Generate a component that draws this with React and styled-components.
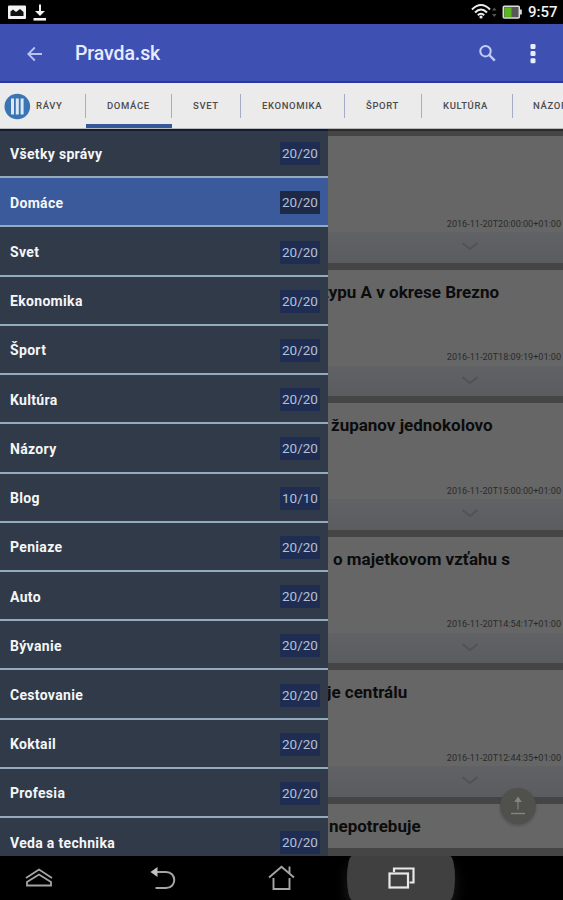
import styled, { createGlobalStyle, css } from 'styled-components';

const GlobalStyle = createGlobalStyle`
* {
  box-sizing: border-box;
}
body {
  margin: 0;
  background: #000;
  font-family: Roboto, "Liberation Sans", sans-serif;
}
`;

const Screen = styled.div`
display: flex;
flex-direction: column;
width: 563px;
height: 900px;
overflow: hidden;
background: #000;
`;

const StatusBar = styled.div`
display: flex;
align-items: center;
flex: none;
height: 24px;
padding: 0 5px 0 8px;
color: #f2f2f2;
svg {
  display: block;
  flex: none;
}
`;

const StatusSpace = styled.div`
flex: 1;
`;

const Clock = styled.span`
flex: none;
width: 30px;
font-size: 15px;
font-weight: 500;
line-height: 24px;
white-space: nowrap;
`;

const Toolbar = styled.header`
display: flex;
align-items: center;
flex: none;
height: 59px;
padding: 2px 25px 0 26px;
background: #3e50b2;
border-bottom: 2px solid #2a37a0;
svg {
  display: block;
  flex: none;
}
`;

const Title = styled.h1`
flex: 1;
margin: 0 0 0 31px;
color: #e6ebff;
font-size: 19.5px;
font-weight: 500;
letter-spacing: -0.1px;
`;

const Tabs = styled.nav`
position: relative;
display: flex;
flex: none;
height: 46px;
background: #ebebeb;
border-bottom: 1px solid #b9b9b9;
overflow: hidden;
`;

const Tab = styled.div`
position: relative;
flex: none;
width: ${(props) => props.$width}px;
padding-left: ${(props) => props.$indent || 21}px;
color: #4c4c4c;
font-size: 9.5px;
font-weight: 500;
letter-spacing: 0.65px;
line-height: 46px;
white-space: nowrap;
&::after {
  content: "";
  position: absolute;
  top: 11px;
  right: 0;
  width: 1px;
  height: 24px;
  background: #a3adc6;
}
${(props) => props.$active && css`
  box-shadow: inset 0 -4px 0 #35589a;
`}
`;

const Badge = styled.div`
position: absolute;
z-index: 1;
top: 0;
left: 0;
width: 36px;
height: 45px;
padding: 10px 0 0 4px;
background: #ebebeb;
`;

const Content = styled.main`
position: relative;
flex: none;
height: 727px;
overflow: hidden;
background: #454545;
box-shadow: inset 0 2px 0 #2b2b2b;
`;

const Feed = styled.div`
display: flex;
flex-direction: column;
gap: 7px;
height: 719px;
padding-top: 7px;
overflow: hidden;
`;

const Card = styled.article`
display: flex;
flex-direction: column;
flex: none;
height: 126.5px;
background: #666;
`;

const CardTitle = styled.h2`
flex: 1;
margin: 0;
padding: 12px 0 0 ${(props) => props.$left}px;
color: #0c0c0c;
font-size: 17px;
font-weight: 700;
line-height: 20px;
white-space: nowrap;
`;

const CardDate = styled.time`
padding: 0 2px 1.5px 0;
color: #2a2a2a;
font-size: 9.1px;
line-height: 14px;
text-align: right;
`;

const CardFooter = styled.div`
display: flex;
flex: none;
height: 30.5px;
padding: 9px 0 0 461px;
background: linear-gradient(#606265, #5a5c5f);
`;

const Drawer = styled.aside`
position: absolute;
top: 0;
left: 0;
width: 328px;
height: 727px;
overflow: hidden;
background: #303a49;
box-shadow: inset 0 2px 0 #111a36;
`;

const DrawerRow = styled.div`
display: flex;
align-items: center;
justify-content: space-between;
height: 49.22px;
padding: 2px 8px 0 10px;
border-bottom: 2px solid #93abbc;
background: ${(props) => (props.$active ? '#3a5a9b' : 'transparent')};
`;

const RowLabel = styled.span`
color: #f4f6f8;
font-size: 14px;
font-weight: 700;
letter-spacing: 0.32px;
`;

const Count = styled.span`
width: 40px;
height: 23px;
border-radius: 1px;
background: ${(props) => (props.$active ? '#1d2947' : '#1f2d52')};
color: #b4c0d6;
font-size: 13.5px;
line-height: 23px;
text-align: center;
`;

const ScrollTop = styled.div`
position: absolute;
top: 659px;
left: 500px;
display: flex;
align-items: center;
justify-content: center;
width: 36px;
height: 36px;
border-radius: 50%;
background: #50504d;
box-shadow: 0 2px 3px rgba(0, 0, 0, 0.18);
`;

const NavBar = styled.footer`
display: flex;
flex: none;
height: 44px;
background: #000;
`;

const NavButton = styled.div`
flex: none;
width: ${(props) => props.$width}px;
padding: 9px 0 0 ${(props) => props.$indent}px;
${(props) => props.$pressed && css`
  border-radius: 5px / 22px;
  background: #404040;
  box-shadow: 0 8px 14px #1c1c1c;
`}
svg {
  display: block;
}
`;

const tabs = [
  { label: 'RÁVY', width: 86, indent: 36 },
  { label: 'DOMÁCE', width: 86, active: true },
  { label: 'SVET', width: 69 },
  { label: 'EKONOMIKA', width: 104 },
  { label: 'ŠPORT', width: 77 },
  { label: 'KULTÚRA', width: 91 },
  { label: 'NÁZORY', width: 86, indent: 20 },
];

const sections = [
  ['Všetky správy', '20/20'],
  ['Domáce', '20/20'],
  ['Svet', '20/20'],
  ['Ekonomika', '20/20'],
  ['Šport', '20/20'],
  ['Kultúra', '20/20'],
  ['Názory', '20/20'],
  ['Blog', '10/10'],
  ['Peniaze', '20/20'],
  ['Auto', '20/20'],
  ['Bývanie', '20/20'],
  ['Cestovanie', '20/20'],
  ['Koktail', '20/20'],
  ['Profesia', '20/20'],
  ['Veda a technika', '20/20'],
];

const articles = [
  { title: '', left: 328, date: '2016-11-20T20:00:00+01:00' },
  { title: 'typu A v okrese Brezno', left: 323, date: '2016-11-20T18:09:19+01:00' },
  { title: 'županov jednokolovo', left: 331, date: '2016-11-20T15:00:00+01:00' },
  { title: 'o majetkovom vzťahu s', left: 333, date: '2016-11-20T14:54:17+01:00' },
  { title: 'je centrálu', left: 327, date: '2016-11-20T12:44:35+01:00' },
  { title: 'nepotrebuje', left: 329, date: '' },
];

function NotificationIcons() {
  return (
    <svg width="40" height="24" viewBox="0 0 40 24">
      <rect x="0" y="5.5" width="18" height="13.5" rx="1" fill="#f2f2f2" />
      <path d="M2.5 16V11.5L5 9.5L8 12L12 9L15.5 12V16Z" fill="#111" />
      <path d="M32 4.5V13M29.5 12L32 14.5L34.5 12Z" fill="#f2f2f2" stroke="#f2f2f2" strokeWidth="2" />
      <path d="M25.5 19.3H38" stroke="#f2f2f2" strokeWidth="2.6" />
    </svg>
  );
}

function SystemIcons() {
  return (
    <svg width="57" height="24" viewBox="0 0 57 24">
      <g fill="none" stroke="#ededed" strokeWidth="2">
        <path d="M1 9.5Q10 0.5 19 9.5" />
        <path d="M4 12.5Q10 6.5 16 12.5" />
        <path d="M6.8 15.3Q10 12 13.2 15.3" />
      </g>
      <circle cx="10" cy="17" r="1.6" fill="#ededed" />
      <path d="M21 10.5L23.3 7.5L25.6 10.5ZM21 14L23.3 17L25.6 14Z" fill="#555" />
      <rect x="32.3" y="6.3" width="16" height="11.6" rx="1" fill="#575757" stroke="#ddd" strokeWidth="1.5" />
      <rect x="33.5" y="7.5" width="7" height="9.4" fill="#58b81c" />
      <rect x="49" y="9.5" width="1.8" height="5" fill="#ddd" />
    </svg>
  );
}

function App() {
  return (
    <>
      <GlobalStyle />
      <Screen>
        <StatusBar>
          <NotificationIcons />
          <StatusSpace />
          <SystemIcons />
          <Clock>9:57</Clock>
        </StatusBar>

        <Toolbar>
          <svg width="18" height="18" viewBox="0 0 18 18" fill="none" stroke="#b9c3f2" strokeWidth="1.8">
            <path d="M16 9H2.8M8.8 2.5L2.3 9L8.8 15.5" />
          </svg>
          <Title>Pravda.sk</Title>
          <svg width="61" height="24" viewBox="0 0 61 24" fill="none">
            <circle cx="8.5" cy="9.2" r="5.2" stroke="#c3cdf8" strokeWidth="2" />
            <path d="M12.3 13L17.8 18.6" stroke="#c3cdf8" strokeWidth="2.4" />
            <g fill="#e9eeff">
              <rect x="53.5" y="2" width="5" height="5" rx="1.3" />
              <rect x="53.5" y="9.1" width="5" height="5" rx="1.3" />
              <rect x="53.5" y="16.2" width="5" height="5" rx="1.3" />
            </g>
          </svg>
        </Toolbar>

        <Tabs>
          {tabs.map((tab) => (
            <Tab key={tab.label} $width={tab.width} $indent={tab.indent} $active={tab.active}>
              {tab.label}
            </Tab>
          ))}
          <Badge>
            <svg width="27" height="27" viewBox="0 0 27 27">
              <circle cx="13.3" cy="13.5" r="12.8" fill="#3b74b3" />
              <path d="M8.5 5.5V21.5M13.3 5.5V21.5M18.1 5.5V21.5" stroke="#dbe8f6" strokeWidth="3" />
            </svg>
          </Badge>
        </Tabs>

        <Content>
          <Feed>
            {articles.map((article) => (
              <Card key={article.left + article.title}>
                <CardTitle $left={article.left}>{article.title}</CardTitle>
                <CardDate>{article.date}</CardDate>
                <CardFooter>
                  <svg width="18" height="11" viewBox="0 0 18 11" fill="none" stroke="#505356" strokeWidth="1.8">
                    <path d="M1.5 2L9 8L16.5 2" />
                  </svg>
                </CardFooter>
              </Card>
            ))}
          </Feed>

          <ScrollTop>
            <svg width="16" height="22" viewBox="0 0 16 22" fill="#85857f" stroke="#85857f">
              <path d="M8 14.5V4M5.3 6.5L8 2.5L10.7 6.5Z" strokeWidth="1.2" />
              <path d="M1 18.5H15" strokeWidth="1.4" />
            </svg>
          </ScrollTop>

          <Drawer>
            {sections.map(([label, count]) => (
              <DrawerRow key={label} $active={label === 'Domáce'}>
                <RowLabel>{label}</RowLabel>
                <Count $active={label === 'Domáce'}>{count}</Count>
              </DrawerRow>
            ))}
          </Drawer>
        </Content>

        <NavBar>
          <NavButton $width={125} $indent={25}>
            <svg width="29" height="26" viewBox="0 0 29 26" fill="none" stroke="#a5a5a5" strokeWidth="1.8">
              <path d="M1 13L14 4.5L27 13" />
              <path d="M2 19.5V17L14 9.5L26 17V20.5H2Z" />
            </svg>
          </NavButton>
          <NavButton $width={125} $indent={25}>
            <svg width="26" height="26" viewBox="0 0 26 26" fill="none" stroke="#a5a5a5" strokeWidth="2">
              <path d="M5 7H16C27 7 27 23 16 23H5.5" />
              <path d="M7.5 2V12L0.5 7Z" fill="#c2c2c2" stroke="none" />
            </svg>
          </NavButton>
          <NavButton $width={97} $indent={18}>
            <svg width="27" height="26" viewBox="0 0 27 26" fill="none" stroke="#a5a5a5" strokeWidth="1.9">
              <path d="M1 12.5L13.5 1.8L26 12.5M21.5 8V1.5" />
              <path d="M5.5 13V24H21.5V13" />
            </svg>
          </NavButton>
          <NavButton $width={108} $indent={40} $pressed>
            <svg width="29" height="26" viewBox="0 0 29 26" fill="none" stroke="#e8e8e8" strokeWidth="2.2">
              <rect x="2.5" y="8.5" width="18.5" height="14" />
              <path d="M7 7V3.5H26.5V17.5H22.5" />
            </svg>
          </NavButton>
        </NavBar>
      </Screen>
    </>
  );
}

export default App;
